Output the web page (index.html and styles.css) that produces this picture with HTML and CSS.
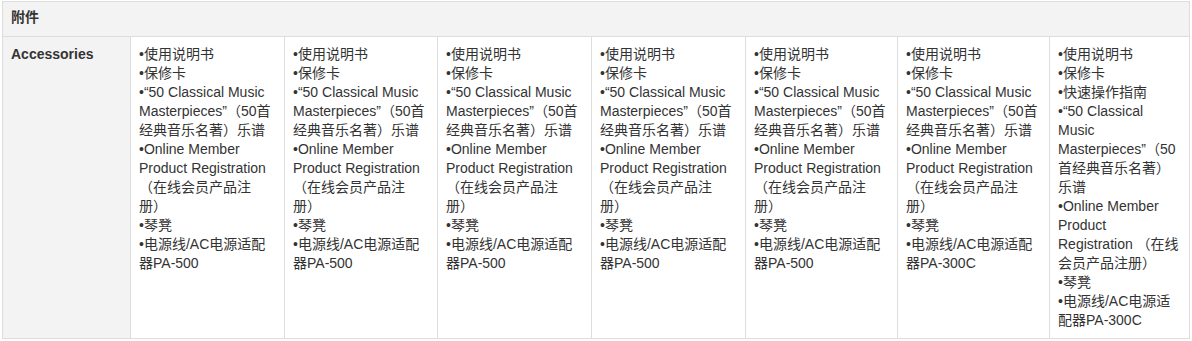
FILE: index.html
```html
<!DOCTYPE html>
<html lang="zh">
<head>
<meta charset="utf-8">
<title>附件</title>
<link rel="stylesheet" href="styles.css">
</head>
<body>
<div class="wrap">
<table class="spec">
  <colgroup>
    <col class="c-label">
    <col class="c-154">
    <col class="c-153">
    <col class="c-154">
    <col class="c-154">
    <col class="c-152">
    <col class="c-152">
    <col class="c-140">
  </colgroup>
  <tr>
    <th class="head" colspan="8">附件</th>
  </tr>
  <tr>
    <th class="label">Accessories</th>
    <td class="cell">
      <div class="item">•使用说明书</div>
      <div class="item">•保修卡</div>
      <div class="item">•“50 Classical Music Masterpieces”（50首经典音乐名著）乐谱</div>
      <div class="item">•Online Member Product Registration （在线会员产品注册）</div>
      <div class="item">•琴凳</div>
      <div class="item">•电源线/AC电源适配器PA-500</div>
    </td>
    <td class="cell">
      <div class="item">•使用说明书</div>
      <div class="item">•保修卡</div>
      <div class="item">•“50 Classical Music Masterpieces”（50首经典音乐名著）乐谱</div>
      <div class="item">•Online Member Product Registration （在线会员产品注册）</div>
      <div class="item">•琴凳</div>
      <div class="item">•电源线/AC电源适配器PA-500</div>
    </td>
    <td class="cell">
      <div class="item">•使用说明书</div>
      <div class="item">•保修卡</div>
      <div class="item">•“50 Classical Music Masterpieces”（50首经典音乐名著）乐谱</div>
      <div class="item">•Online Member Product Registration （在线会员产品注册）</div>
      <div class="item">•琴凳</div>
      <div class="item">•电源线/AC电源适配器PA-500</div>
    </td>
    <td class="cell">
      <div class="item">•使用说明书</div>
      <div class="item">•保修卡</div>
      <div class="item">•“50 Classical Music Masterpieces”（50首经典音乐名著）乐谱</div>
      <div class="item">•Online Member Product Registration （在线会员产品注册）</div>
      <div class="item">•琴凳</div>
      <div class="item">•电源线/AC电源适配器PA-500</div>
    </td>
    <td class="cell">
      <div class="item">•使用说明书</div>
      <div class="item">•保修卡</div>
      <div class="item">•“50 Classical Music Masterpieces”（50首经典音乐名著）乐谱</div>
      <div class="item">•Online Member Product Registration （在线会员产品注册）</div>
      <div class="item">•琴凳</div>
      <div class="item">•电源线/AC电源适配器PA-500</div>
    </td>
    <td class="cell">
      <div class="item">•使用说明书</div>
      <div class="item">•保修卡</div>
      <div class="item">•“50 Classical Music Masterpieces”（50首经典音乐名著）乐谱</div>
      <div class="item">•Online Member Product Registration （在线会员产品注册）</div>
      <div class="item">•琴凳</div>
      <div class="item">•电源线/AC电源适配器PA-300C</div>
    </td>
    <td class="cell">
      <div class="item">•使用说明书</div>
      <div class="item">•保修卡</div>
      <div class="item">•快速操作指南</div>
      <div class="item">•“50 Classical Music Masterpieces”（50首经典音乐名著）乐谱</div>
      <div class="item">•Online Member Product Registration （在线会员产品注册）</div>
      <div class="item">•琴凳</div>
      <div class="item">•电源线/AC电源适配器PA-300C</div>
    </td>
  </tr>
</table>
</div>
</body>
</html>
```
FILE: styles.css
```css
html, body {
  margin: 0;
  padding: 0;
  background: #ffffff;
}

.wrap {
  padding: 1px 0 0 2px;
}

.spec {
  table-layout: fixed;
  border-collapse: separate;
  border-spacing: 0;
  width: 1188px;
  border-top: 1px solid #dddddd;
  border-left: 1px solid #dddddd;
  font-family: "Liberation Sans", "Noto Sans CJK SC", sans-serif;
  font-size: 14px;
  line-height: 19px;
  color: #333333;
  text-spacing-trim: space-all;
}

.c-label { width: 128px; }
.c-154 { width: 154px; }
.c-153 { width: 153px; }
.c-152 { width: 152px; }
.c-140 { width: 140px; }

.spec th,
.spec td {
  border-right: 1px solid #dddddd;
  border-bottom: 1px solid #dddddd;
  vertical-align: top;
  text-align: left;
}

.head {
  background: #f3f3f3;
  font-weight: bold;
  padding: 6px 8px 9px;
}

.label {
  background: #f3f3f3;
  font-weight: bold;
  padding: 8px 8px;
}

.cell {
  background: #ffffff;
  padding: 8px 8px;
}

.item {
  margin: 0;
}
```
